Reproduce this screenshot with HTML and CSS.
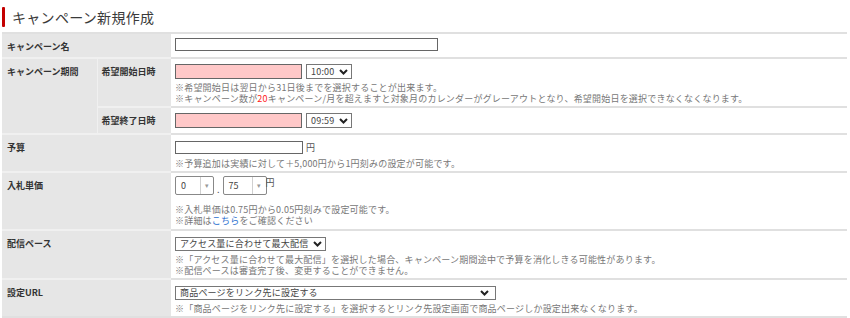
FILE: index.html
```html
<!DOCTYPE html>
<html lang="ja">
<head>
<meta charset="utf-8">
<title>キャンペーン新規作成</title>
<link rel="stylesheet" href="styles.css">
</head>
<body>
<div class="page">

  <h1 class="title"><span class="title-bar"></span>キャンペーン新規作成</h1>

  <table class="form">
    <colgroup>
      <col class="c1"><col class="c2"><col>
    </colgroup>

    <!-- campaign name -->
    <tr class="r-name">
      <th colspan="2">キャンペーン名</th>
      <td><span class="text wide"></span></td>
    </tr>

    <!-- period -->
    <tr class="r-start">
      <th rowspan="2" class="group">キャンペーン期間</th>
      <th class="sub">希望開始日時</th>
      <td>
        <div class="line">
          <span class="text date"></span>
          <span class="select">10:00 <svg width="9" height="6" viewBox="0 0 9 6"><polyline points="1,1 4.5,4.5 8,1" /></svg></span>
        </div>
        <p class="note">※希望開始日は翌日から31日後までを選択することが出来ます。</p>
        <p class="note">※キャンペーン数が<span class="red">20</span>キャンペーン/月を超えますと対象月のカレンダーがグレーアウトとなり、希望開始日を選択できなくなくなります。</p>
      </td>
    </tr>
    <tr class="r-end">
      <th class="sub">希望終了日時</th>
      <td>
        <div class="line">
          <span class="text date"></span>
          <span class="select">09:59 <svg width="9" height="6" viewBox="0 0 9 6"><polyline points="1,1 4.5,4.5 8,1" /></svg></span>
        </div>
      </td>
    </tr>

    <!-- budget -->
    <tr class="r-budget">
      <th colspan="2">予算</th>
      <td>
        <div class="line tight"><span class="text budget"></span><span class="unit">円</span></div>
        <p class="note">※予算追加は実績に対して＋5,000円から1円刻みの設定が可能です。</p>
      </td>
    </tr>

    <!-- bid -->
    <tr class="r-bid">
      <th colspan="2">入札単価</th>
      <td>
        <div class="line">
          <span class="spin s-int"><span class="val">0</span><span class="arrow">▾</span></span>
          <span class="dot">.</span>
          <span class="spin s-dec"><span class="val">75</span><span class="arrow">▾</span></span>
          <span class="unit top">円</span>
        </div>
        <p class="note">※入札単価は0.75円から0.05円刻みで設定可能です。</p>
        <p class="note">※詳細は<span class="link">こちら</span>をご確認ください</p>
      </td>
    </tr>

    <!-- pace -->
    <tr class="r-pace">
      <th colspan="2">配信ペース</th>
      <td>
        <div class="line">
          <span class="select">アクセス量に合わせて最大配信 <svg width="9" height="6" viewBox="0 0 9 6"><polyline points="1,1 4.5,4.5 8,1" /></svg></span>
        </div>
        <p class="note">※「アクセス量に合わせて最大配信」を選択した場合、キャンペーン期間途中で予算を消化しきる可能性があります。</p>
        <p class="note">※配信ペースは審査完了後、変更することができません。</p>
      </td>
    </tr>

    <!-- url -->
    <tr class="r-url">
      <th colspan="2">設定URL</th>
      <td>
        <div class="line">
          <span class="select url">商品ページをリンク先に設定する <svg width="9" height="6" viewBox="0 0 9 6"><polyline points="1,1 4.5,4.5 8,1" /></svg></span>
        </div>
        <p class="note">※「商品ページをリンク先に設定する」を選択するとリンク先設定画面で商品ページしか設定出来なくなります。</p>
      </td>
    </tr>
  </table>

</div>
</body>
</html>
```

FILE: styles.css
```css
/* Page */
body {
  margin: 0;
  background: #ffffff;
  font-family: "Noto Sans CJK JP", "Noto Sans", sans-serif;
  color: #333333;
}

.page {
  padding: 7px 3px 0 2px;
}

/* Title */
.title {
  display: flex;
  align-items: center;
  gap: 7px;
  height: 20px;
  margin: 0 0 5px;
  font-size: 14px;
  letter-spacing: 0.3px;
  font-weight: normal;
  color: #3a3a3a;
}

.title-bar {
  width: 3px;
  height: 20px;
  background-color: #c40000;
  border-radius: 1px;
}

/* Form table */
.form {
  width: 100%;
  border-collapse: collapse;
  font-size: 9px;
}

.form col.c1 { width: 95px; }
.form col.c2 { width: 74px; }

.form th,
.form td {
  text-align: left;
  vertical-align: top;
  padding: 5px 4px 0;
  border-top: 2px solid #e0e0e0;
  line-height: 13px;
}

.form th {
  background-color: #e6e6e6;
  font-weight: bold;
  color: #333333;
  padding-left: 5px;
  padding-top: 6px;
  border-top-color: #f0f0f0;
}

.form th.group {
  border-right: 1px solid #f0f0f0;
}

.form th.sub {
  padding-left: 4px;
}

.form tr:last-child td,
.form tr:last-child th {
  border-bottom: 2px solid #e0e0e0;
}

.form tr:first-child th,
.form tr:first-child td {
  border-top-color: #e0e0e0;
}

.r-name { height: 25px; }
.r-start { height: 49px; }
.r-end { height: 27px; }
.r-budget { height: 38px; }
.r-bid { height: 58px; }
.r-pace { height: 49px; }
.r-url { height: 38px; }

.r-name td { padding-top: 4px; }

/* Controls */
.line {
  display: flex;
  align-items: center;
  gap: 4px;
  height: 15px;
}

.line.tight { gap: 3px; }

.text {
  display: inline-block;
  box-sizing: border-box;
  height: 13px;
  border: 1px solid #666666;
  background: #ffffff;
}

.text.wide { width: 263px; }
.text.date { width: 127px; height: 15px; background: #ffc8c8; }
.text.budget { width: 128px; }

.select {
  display: inline-flex;
  align-items: center;
  gap: 5px;
  box-sizing: border-box;
  height: 15px;
  padding: 0 3px 0 4px;
  border: 1px solid #777777;
  background: #ffffff;
  color: #444444;
  font-size: 9px;
  letter-spacing: 0.2px;
  white-space: nowrap;
}

.r-pace .select,
.r-url .select {
  height: 14px;
}

.select svg polyline {
  fill: none;
  stroke: #222222;
  stroke-width: 2;
}

.select.url {
  width: 321px;
  justify-content: space-between;
  padding-right: 6px;
}

.unit {
  color: #555555;
  font-size: 9px;
}

.unit.top {
  align-self: flex-start;
  margin-left: -4px;
}

/* Bid spinners */
.r-bid .line {
  height: 19px;
  gap: 3px;
}

.r-bid td { padding-top: 3px; }

.spin {
  display: inline-flex;
  box-sizing: border-box;
  height: 19px;
  border: 1px solid #888888;
  border-radius: 2px;
  background: #ffffff;
}

.spin .val {
  display: flex;
  align-items: center;
  padding-left: 5px;
  color: #444444;
  font-size: 9px;
}

.spin .arrow {
  display: flex;
  align-items: center;
  justify-content: center;
  border-left: 1px solid #d0d0d0;
  color: #999999;
  font-size: 7px;
}

.s-int { width: 39px; }
.s-int .val { width: 22px; }
.s-int .arrow { width: 14px; }
.s-dec { width: 44px; }
.s-dec .val { width: 27px; }
.s-dec .arrow { width: 15px; }

.dot {
  align-self: flex-end;
  color: #555555;
  line-height: 11px;
}

/* Notes */
.note {
  margin: 0;
  color: #777777;
  font-size: 9px;
  line-height: 11px;
  letter-spacing: 0.2px;
  white-space: nowrap;
}

.line + .note {
  margin-top: 3px;
}

.r-bid .line + .note {
  margin-top: 9px;
}

.red { color: #ff2222; }
.link { color: #2a6fd0; }
```
